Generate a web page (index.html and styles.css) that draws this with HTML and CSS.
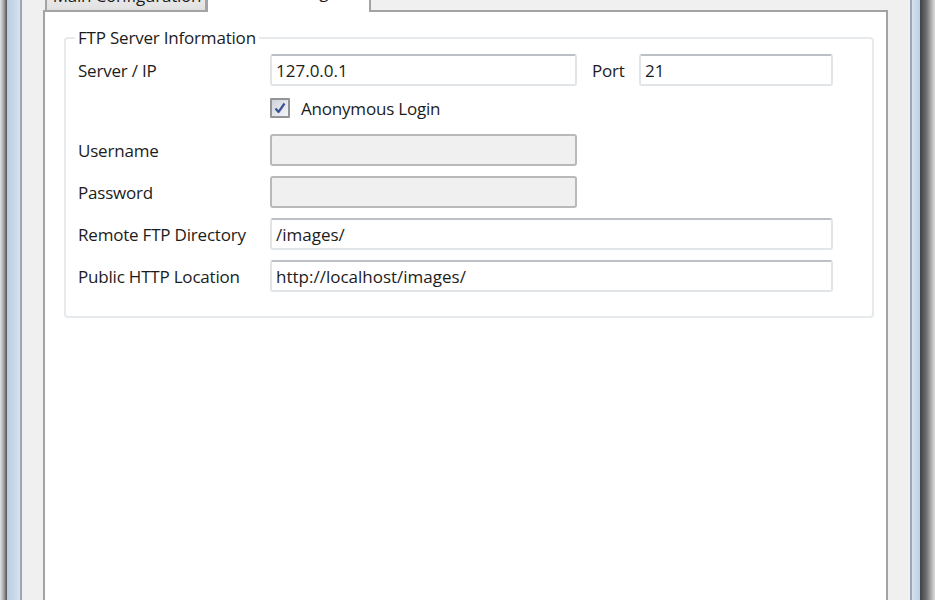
FILE: index.html
```html
<!DOCTYPE html>
<html lang="en">
<head>
  <meta charset="UTF-8">
  <title>FTP Settings</title>
  <link rel="stylesheet" href="styles.css">
</head>
<body>
  <div class="window">
    <div class="shadow-left"></div>
    <div class="frame-left"></div>

    <div class="client">
      <div class="tabs">
        <div class="tab">Main Configuration</div>
        <div class="tab selected">FTP Settings</div>
      </div>

      <div class="tab-page">
        <fieldset class="group">
          <legend>FTP Server Information</legend>
          <div class="form">
            <label class="label">Server / IP</label>
            <input class="field" type="text" value="127.0.0.1">
            <label class="label port-label">Port</label>
            <input class="field" type="text" value="21">

            <div class="check-row">
              <span class="checkbox">
                <svg width="14" height="14" viewBox="0 0 14 14"><path d="M2.5 7.5 L5.5 11 L11.5 2.5" fill="none" stroke="#3b5397" stroke-width="2.2" stroke-linejoin="round"/></svg>
              </span>
              <span>Anonymous Login</span>
            </div>

            <label class="label">Username</label>
            <input class="field" type="text" disabled>

            <label class="label">Password</label>
            <input class="field" type="password" disabled>

            <label class="label">Remote FTP Directory</label>
            <input class="field wide" type="text" value="/images/">

            <label class="label">Public HTTP Location</label>
            <input class="field wide" type="text" value="http://localhost/images/">
          </div>
        </fieldset>
      </div>
    </div>

    <div class="frame-right"></div>
    <div class="shadow-right"></div>
  </div>
</body>
</html>
```

FILE: styles.css
```css
body {
  margin: 0;
  font-family: "Open Sans", "DejaVu Sans", sans-serif;
  font-size: 17px;
  letter-spacing: -0.2px;
  color: #1c1c1c;
  overflow: hidden;
}

.window {
  display: flex;
  height: 600px;
}

/* window chrome */
.shadow-left {
  width: 7px;
  background: linear-gradient(to right, #e4e4e4, #9a9a9a 60%, #4e4e4e);
}

.frame-left {
  width: 13px;
  background: linear-gradient(to right, #b9cce0, #d6e2ee);
  border-right: 2px solid #9aa7b4;
}

.frame-right {
  width: 8px;
  background: linear-gradient(to right, #d6e2ee, #bccfe3);
  border-left: 2px solid #9aa7b4;
}

.shadow-right {
  width: 15px;
  background: linear-gradient(to right, #3f4347, #6b6b6b 40%, #b8b8b8 80%, #dcdcdc);
}

.client {
  flex: 1;
  display: flex;
  flex-direction: column;
  background-color: #f0f0f0;
  padding: 0 22px 0 21px;
}

/* tabs */
.tabs {
  display: flex;
  align-items: flex-end;
  height: 30px;
  margin-top: -20px;
  padding-left: 2px;
  position: relative;
  z-index: 1;
}

.tab {
  width: 156px;
  height: 27px;
  line-height: 25px;
  padding-left: 2px;
  text-align: center;
  background: linear-gradient(#f2f2f2, #e1e1e1);
  border: 2px solid #a3a3a3;
  border-bottom: none;
}

.tab.selected {
  width: 159px;
  height: 32px;
  line-height: 24px;
  margin-bottom: -2px;
  background: #fff;
  border-left: 1px solid #a3a3a3;
}

.tab-page {
  flex: 1;
  background: #fff;
  border: 2px solid #a3a3a3;
  border-bottom: none;
  padding: 15px 12px 0 19px;
}

/* group box */
.group {
  margin: 0;
  border: 2px solid #e6eaed;
  border-radius: 4px;
  padding: 5px 38px 24px 12px;
}

.group legend {
  padding: 0 3px;
  margin-left: -3px;
  line-height: 22px;
}

.form {
  display: grid;
  grid-template-columns: 192px 307px 62px 194px;
  grid-template-rows: 32px 28px repeat(4, 32px);
  row-gap: 10px;
  align-items: center;
}

.label {
  grid-column: 1;
}

.port-label {
  grid-column: 3;
  padding-left: 15px;
}

.field {
  box-sizing: border-box;
  height: 32px;
  margin: 0;
  padding: 0 4px;
  font: inherit;
  color: #1c1c1c;
  background: #fff;
  border: 2px solid #e2e5e8;
  border-top-color: #bcbfc4;
  border-radius: 3px;
  outline: none;
}

.field:disabled {
  background: #f0f0f0;
  border-color: #b9b9b9;
}

.field.wide {
  grid-column: 2 / 5;
}

.check-row {
  grid-column: 2 / 5;
  align-self: start;
  display: flex;
  align-items: center;
  gap: 11px;
  height: 22px;
  margin-top: 1px;
}

.checkbox {
  width: 16px;
  height: 16px;
  display: flex;
  align-items: center;
  justify-content: center;
  border: 2px solid #929496;
  border-radius: 1px;
  background: linear-gradient(135deg, #cfd4db, #f4f5f7);
}
```
